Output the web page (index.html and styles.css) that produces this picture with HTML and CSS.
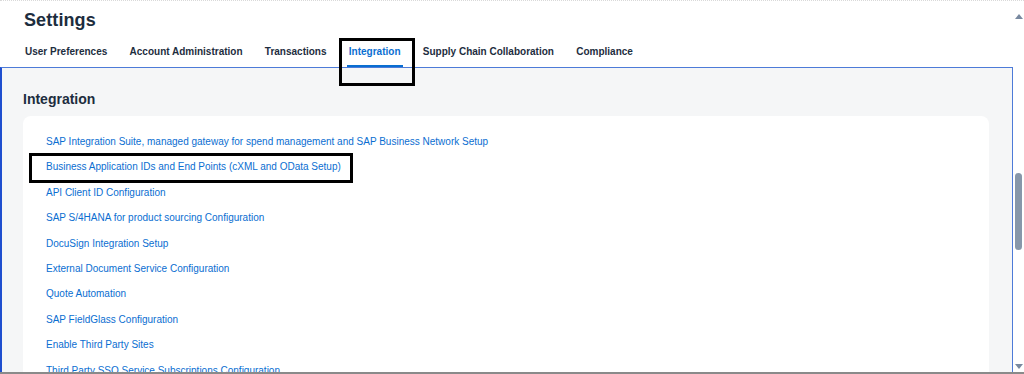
FILE: index.html
```html
<!DOCTYPE html>
<html lang="en">
<head>
<meta charset="utf-8">
<title>Settings</title>
<link rel="stylesheet" href="styles.css">
</head>
<body>
<div class="page">
  <div class="main">
    <header class="header">
      <h1 class="title">Settings</h1>
      <nav class="tabs">
        <span class="tab">User Preferences</span>
        <span class="tab">Account Administration</span>
        <span class="tab">Transactions</span>
        <span class="tab tab-active">Integration<span class="mark mark-tab"></span></span>
        <span class="tab">Supply Chain Collaboration</span>
        <span class="tab">Compliance</span>
      </nav>
    </header>
    <section class="panel">
      <h2 class="panel-title">Integration</h2>
      <div class="card">
        <a class="link">SAP Integration Suite, managed gateway for spend management and SAP Business Network Setup</a>
        <a class="link link-marked">Business Application IDs and End Points (cXML and OData Setup)<span class="mark mark-link"></span></a>
        <a class="link">API Client ID Configuration</a>
        <a class="link">SAP S/4HANA for product sourcing Configuration</a>
        <a class="link">DocuSign Integration Setup</a>
        <a class="link">External Document Service Configuration</a>
        <a class="link">Quote Automation</a>
        <a class="link">SAP FieldGlass Configuration</a>
        <a class="link">Enable Third Party Sites</a>
        <a class="link">Third Party SSO Service Subscriptions Configuration</a>
      </div>
    </section>
  </div>
  <div class="vscroll">
    <span class="arrow arrow-up"></span>
    <span class="thumb"></span>
    <span class="arrow arrow-down"></span>
  </div>
</div>
<div class="hbar"></div>
</body>
</html>
```
FILE: styles.css
```css
html, body {
  margin: 0;
  padding: 0;
  background: #ffffff;
  overflow: hidden;
}
body {
  font-family: "Liberation Sans", Arial, sans-serif;
  color: #32363a;
  width: 1024px;
  height: 374px;
}
.page {
  display: flex;
  height: 372px;
  overflow: hidden;
  border-top: 1px dotted #d9d9d9;
  box-sizing: border-box;
}
.main {
  width: 1013px;
  display: flex;
  flex-direction: column;
}
.header {
  padding: 8px 0 0 24px;
}
.title {
  margin: 0;
  font-size: 18px;
  font-weight: 700;
  line-height: 22px;
  color: #1d2d3e;
  letter-spacing: 0.1px;
}
.tabs {
  display: flex;
  gap: 22.3px;
  margin-top: 12px;
  padding-left: 1px;
}
.tab {
  position: relative;
  font-size: 10px;
  font-weight: 700;
  line-height: 13px;
  padding: 2px 0 9px;
  color: #1d2d3e;
}
.tab-active {
  color: #0a6ed1;
}
.tab-active::after {
  content: "";
  position: absolute;
  left: -2px;
  right: -2px;
  bottom: 0;
  height: 2px;
  background: #0a6ed1;
}
.mark {
  position: absolute;
  border: 3px solid #000;
  box-sizing: border-box;
  pointer-events: none;
}
.mark-tab {
  left: -10px;
  top: -5px;
  width: 76px;
  height: 48px;
}
.panel {
  flex: 1;
  background: #f5f6f7;
  border-top: 1px solid #4d7bd8;
  border-left: 2px solid #1f4fcf;
  border-right: 1px solid #4d7bd8;
  padding: 23px 23px 0 21px;
}
.panel-title {
  margin: 0 0 8px 0;
  font-size: 14px;
  font-weight: 700;
  line-height: 17px;
  color: #1d2d3e;
}
.card {
  background: #ffffff;
  border-radius: 8px 8px 0 0;
  padding: 13px 0 0 23px;
  display: flex;
  flex-direction: column;
}
.link {
  position: relative;
  font-size: 10px;
  line-height: 13px;
  padding: 6px 0;
  margin-bottom: 0.4px;
  color: #0a6ed1;
  width: max-content;
}
.mark-link {
  left: -17px;
  top: -1px;
  width: 324px;
  height: 30px;
}
.vscroll {
  width: 11px;
  position: relative;
  background: #ffffff;
}
.thumb {
  position: absolute;
  left: 2px;
  top: 172px;
  width: 7px;
  height: 77px;
  border-radius: 4px;
  background: #8797aa;
}
.arrow {
  position: absolute;
  left: 2px;
  width: 0;
  height: 0;
  border-left: 4px solid transparent;
  border-right: 4px solid transparent;
}
.arrow-up {
  top: 13px;
  border-bottom: 5px solid #7889a0;
}
.arrow-down {
  bottom: 3px;
  border-top: 5px solid #7889a0;
}
.hbar {
  height: 2px;
  background: #8a8a8a;
}
```
